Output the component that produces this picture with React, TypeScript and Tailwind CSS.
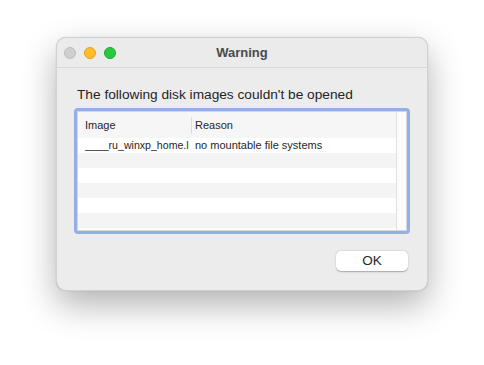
import React from "react";

const font = { fontFamily: '"Liberation Sans", Arial, sans-serif' };

export default function App() {
  const rows = [
    { image: "____ru_winxp_home.l", reason: "no mountable file systems" },
    { image: "", reason: "" },
    { image: "", reason: "" },
    { image: "", reason: "" },
    { image: "", reason: "" },
    { image: "", reason: "" },
  ];
  return (
    <div className="w-[484px] h-[365px] bg-white pt-[37px] pl-[56px]" style={font}>
      <div className="w-[372px] h-[254px] rounded-[10px] bg-[#ececec] border border-[#d2d2d2] shadow-[0_14px_34px_rgba(0,0,0,0.3),0_0_1px_rgba(0,0,0,0.3)] flex flex-col overflow-hidden">
        <div className="h-[30px] shrink-0 border-b border-[#d8d8d8] bg-[#ebebeb] flex items-center relative">
          <div className="flex items-center gap-[8px] pl-[7px]">
            <div className="w-[12px] h-[12px] rounded-full bg-[#cfcfcf] border border-[#bdbdbd]" />
            <div className="w-[12px] h-[12px] rounded-full bg-[#febc2e] border border-[#e3a21a]" />
            <div className="w-[12px] h-[12px] rounded-full bg-[#28c840] border border-[#1aab29]" />
          </div>
          <div className="absolute inset-0 flex items-center justify-center text-[13px] font-bold text-[#4a4a4a]">
            Warning
          </div>
        </div>
        <div className="flex-1 flex flex-col">
          <div className="pt-[18px] pl-[20px] text-[13.7px] leading-[17px] text-[#242424]">
            The following disk images couldn't be opened
          </div>
          <div className="mt-[5px] ml-[17px] w-[336px] h-[126px] rounded-[4px] border-[3px] border-[#93afe8] bg-white">
            <div className="w-full h-full border border-[#d6d6d6] flex">
              <div className="flex-1 flex flex-col">
                <div className="h-[26px] flex items-center text-[11px] text-[#262626] bg-[#f6f6f6]">
                  <div className="w-[113px] pl-[7px] h-full flex items-center">Image</div>
                  <div className="h-[17px] w-px bg-[#dadada]" />
                  <div className="flex-1 pl-[3px]">Reason</div>
                </div>
                {rows.map((r, i) => (
                  <div
                    key={i}
                    className={`h-[15px] flex items-center text-[11px] text-[#262626] ${i % 2 === 0 ? "bg-white" : "bg-[#f4f4f4]"}`}
                  >
                    <div className="w-[112px] pl-[7px] text-[10.6px] whitespace-nowrap">{r.image}</div>
                    <div className="flex-1 pl-[5px] whitespace-nowrap">{r.reason}</div>
                  </div>
                ))}
              </div>
              <div className="w-[10px] border-l border-[#e0e0e0] bg-[#fbfbfb]" />
            </div>
          </div>
          <div className="flex-1 flex justify-end items-end pr-[19px] pb-[19px]">
            <div className="w-[72px] h-[20px] rounded-[5px] bg-white shadow-[0_0.5px_1.5px_rgba(0,0,0,0.3)] flex items-center justify-center text-[13.5px] text-[#262626]">
              OK
            </div>
          </div>
        </div>
      </div>
    </div>
  );
}
